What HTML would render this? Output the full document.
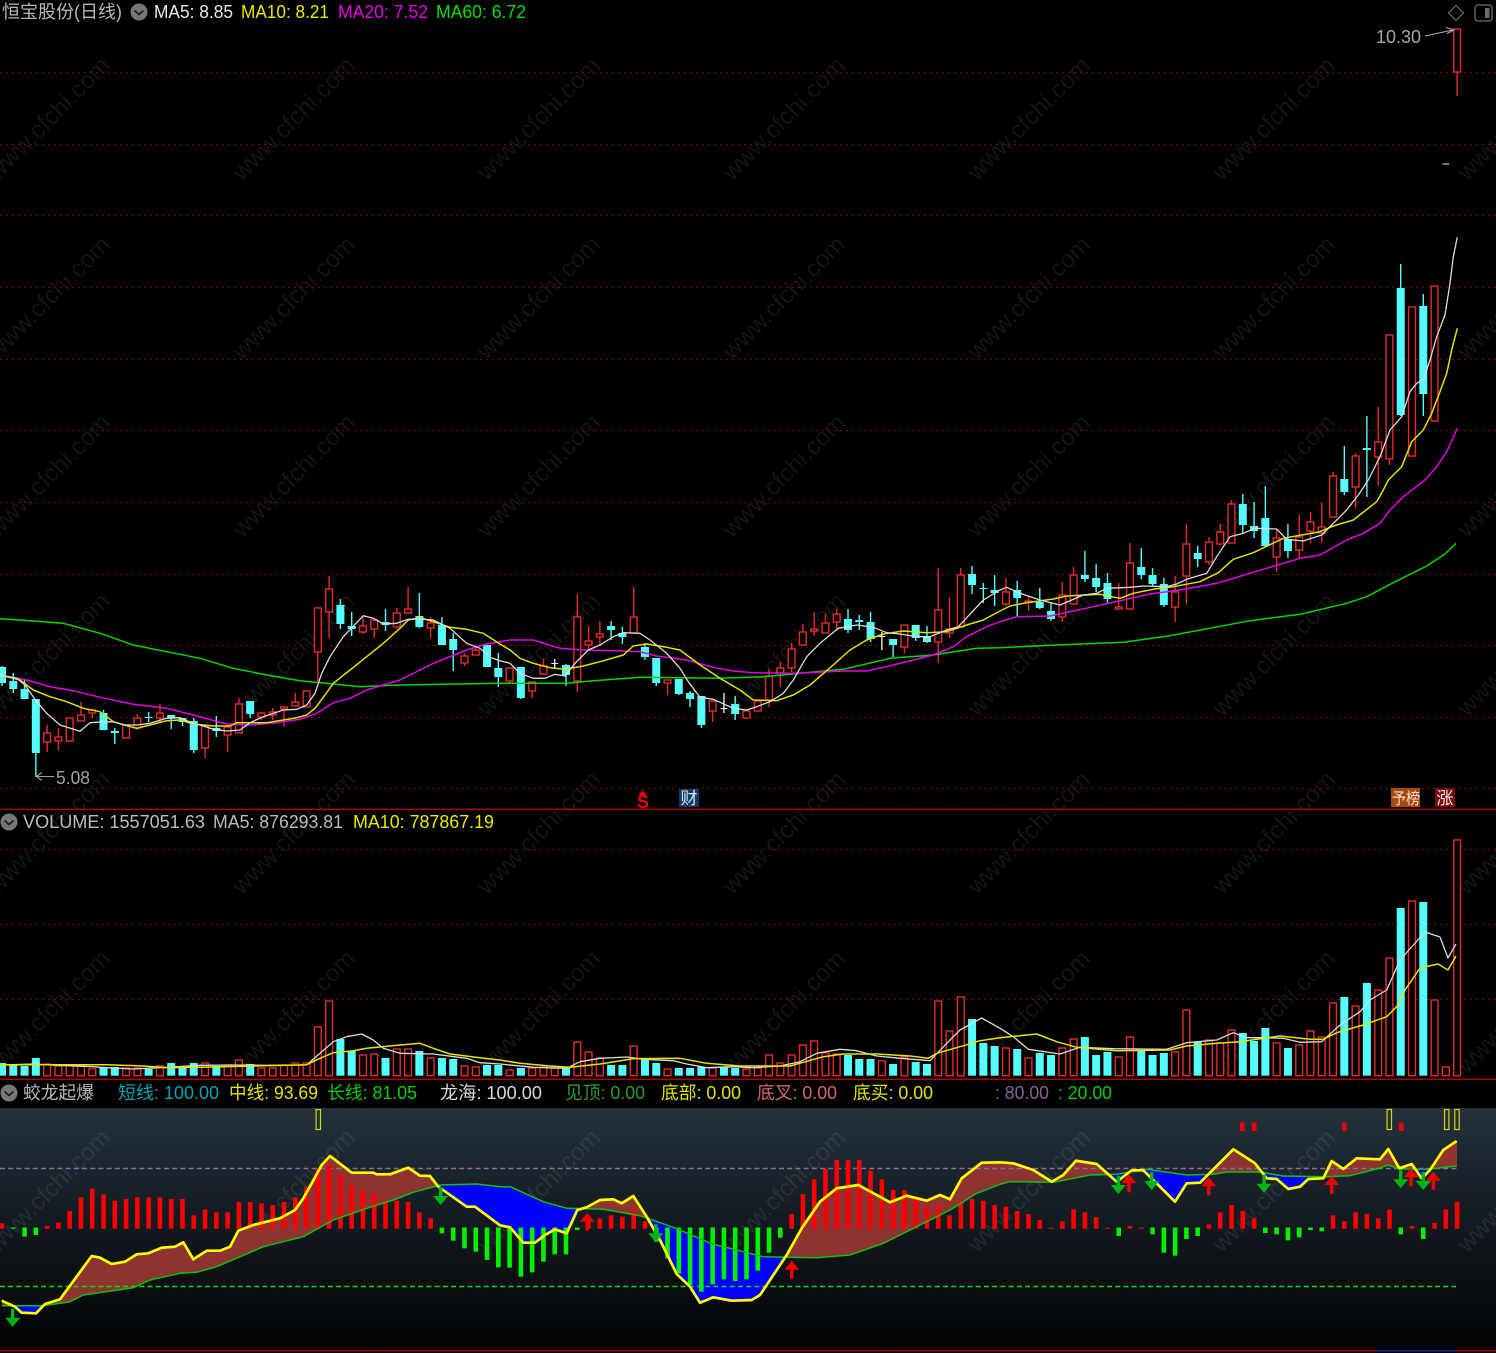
<!DOCTYPE html>
<html><head><meta charset="utf-8"><title>恒宝股份(日线)</title>
<style>
html,body{margin:0;padding:0;background:#000;width:1496px;height:1353px;overflow:hidden}
svg{display:block}
text{font-family:"Liberation Sans","WenQuanYi Zen Hei","Noto Sans CJK SC",sans-serif;font-size:18px}
.wm{font-size:24.500px;fill:#fff;fill-opacity:.08}
</style></head><body>
<svg id="s" xmlns="http://www.w3.org/2000/svg" width="1496" height="1353" viewBox="0 0 1496 1353">
<defs><linearGradient id="pg" x1="0" y1="0" x2="0" y2="1"><stop offset="0" stop-color="#24313d"/><stop offset=".45" stop-color="#141b22"/><stop offset="1" stop-color="#010203"/></linearGradient></defs>
<rect width="1496" height="1353" fill="#000"/>
<rect x="0" y="1108" width="1496" height="243" fill="url(#pg)"/>
<g id="wm"></g>
<g id="grid"></g>
<g id="vol"></g>
<g id="cand"></g>
<g id="ind"></g>

<rect x="0" y="808.6" width="1496" height="1.4" fill="#b00000"/>
<rect x="0" y="1078.6" width="1496" height="1.4" fill="#b00000"/>
<rect x="0" y="1350" width="1496" height="1.6" fill="#a00000"/>
<rect x="1376" y="1350" width="80" height="1.6" fill="#2020a0"/>

<!-- header 1 -->
<text x="2" y="18" textLength="120" lengthAdjust="spacingAndGlyphs" fill="#b8b8b8">恒宝股份(日线)</text>
<circle cx="139" cy="12" r="8.5" fill="#777"/><path d="M134.5 10.5l4.5 4 4.5-4" fill="none" stroke="#1a1a1a" stroke-width="1.6"/>
<text x="154" y="18" textLength="79" lengthAdjust="spacingAndGlyphs" fill="#e8e8e8">MA5: 8.85</text>
<text x="241" y="18" textLength="88" lengthAdjust="spacingAndGlyphs" fill="#e8e800">MA10: 8.21</text>
<text x="338" y="18" textLength="90" lengthAdjust="spacingAndGlyphs" fill="#e800e8">MA20: 7.52</text>
<text x="436" y="18" textLength="90" lengthAdjust="spacingAndGlyphs" fill="#00e000">MA60: 6.72</text>
<!-- top right icons -->
<path d="M1456 5.5l7.5 7.5-7.5 7.5-7.5-7.5z" fill="none" stroke="#606060" stroke-width="1.3"/>
<rect x="1475" y="5" width="17" height="16" rx="3" fill="none" stroke="#5c5c5c" stroke-width="1.6"/><rect x="1485" y="8" width="4.5" height="10" fill="#6a6a6a"/>
<!-- price markers -->
<text x="1376" y="43" textLength="45" lengthAdjust="spacingAndGlyphs" fill="#a8a8a8">10.30</text>
<path d="M1425 36L1453 30M1446 27.5L1454 30L1447 33.5" fill="none" stroke="#a8a8a8" stroke-width="1.1"/>
<text x="56" y="784" textLength="34" lengthAdjust="spacingAndGlyphs" fill="#a0a0a0">5.08</text>
<path d="M54 776.500H37M42 772.500L36.500 776.500L42 780.500" fill="none" stroke="#a0a0a0" stroke-width="1.1"/>
<!-- info flags -->
<path d="M642.500 790.500l4.500 4.500h-9z" fill="#f00000"/>
<text x="643" y="808" text-anchor="middle" fill="#f00000" style="font-size:18px;font-weight:700">S</text>
<rect x="679" y="789" width="20" height="18" fill="#0e3a6c"/>
<text x="689" y="804" text-anchor="middle" fill="#e4e4e4" style="font-size:17px">财</text>
<rect x="1391" y="788" width="29" height="19" fill="#a84a10"/>
<text x="1392" y="804" textLength="28" lengthAdjust="spacingAndGlyphs" fill="#f0e0d0" style="font-size:16px">予榜</text>
<rect x="1435" y="788" width="20" height="19" fill="#7a0a0a"/>
<text x="1445" y="804" text-anchor="middle" fill="#f4e8e8" style="font-size:17px">涨</text>

<!-- header 2 -->
<circle cx="9" cy="822" r="8.5" fill="#777"/><path d="M4.500 820.500l4.500 4 4.500-4" fill="none" stroke="#1a1a1a" stroke-width="1.6"/>
<text x="23" y="828" textLength="182" lengthAdjust="spacingAndGlyphs" fill="#bcbcbc">VOLUME: 1557051.63</text>
<text x="213" y="828" textLength="130" lengthAdjust="spacingAndGlyphs" fill="#bcbcbc">MA5: 876293.81</text>
<text x="353" y="828" textLength="141" lengthAdjust="spacingAndGlyphs" fill="#e8e800">MA10: 787867.19</text>

<!-- header 3 -->
<circle cx="9" cy="1093" r="8.5" fill="#777"/><path d="M4.500 1091.500l4.500 4 4.500-4" fill="none" stroke="#1a1a1a" stroke-width="1.6"/>
<text x="23" y="1099" textLength="71" lengthAdjust="spacingAndGlyphs" fill="#b8b8b8">蛟龙起爆</text>
<text x="118" y="1099" textLength="101" lengthAdjust="spacingAndGlyphs" fill="#00a4b4">短线: 100.00</text>
<text x="229" y="1099" textLength="89" lengthAdjust="spacingAndGlyphs" fill="#e4e400">中线: 93.69</text>
<text x="327" y="1099" textLength="90" lengthAdjust="spacingAndGlyphs" fill="#00d000">长线: 81.05</text>
<text x="440" y="1099" textLength="102" lengthAdjust="spacingAndGlyphs" fill="#d8d8d8">龙海: 100.00</text>
<text x="565" y="1099" textLength="80" lengthAdjust="spacingAndGlyphs" fill="#2c9c2c">见顶: 0.00</text>
<text x="661" y="1099" textLength="80" lengthAdjust="spacingAndGlyphs" fill="#e4e400">底部: 0.00</text>
<text x="757" y="1099" textLength="80" lengthAdjust="spacingAndGlyphs" fill="#d86868">底叉: 0.00</text>
<text x="853" y="1099" textLength="80" lengthAdjust="spacingAndGlyphs" fill="#e4e400">底买: 0.00</text>
<text x="995" y="1099" textLength="54" lengthAdjust="spacingAndGlyphs" fill="#8a6096">: 80.00</text>
<text x="1058" y="1099" textLength="54" lengthAdjust="spacingAndGlyphs" fill="#00d000">: 20.00</text>
</svg>
<script>
var $=function(i){return document.getElementById(i)};
var X=function(i){return 2+11.28*i};
var P=function(ox,oy,a){var r=[];for(var k=0;k<a.length;k+=2)r.push([ox+a[k]/3,oy+a[k+1]/3]);return r};
var S=function(p){return p.map(function(q){return q[0].toFixed(1)+','+q[1].toFixed(1)}).join(' ')};
var line=function(p,c,w){return '<polyline points="'+S(p)+'" fill="none" stroke="'+c+'" stroke-width="'+w+'" stroke-linejoin="round"/>'};
/* watermark */
var h='';[48,293,538,783,1028,1273,1518].forEach(function(x){[118,297,475,654,832,1011,1190].forEach(function(y){
h+='<text class="wm" text-anchor="middle" y="9" transform="translate('+x+','+y+') rotate(-45)">www.cfchi.com</text>'})});
$('wm').innerHTML=h;
/* grid */
h='';[72,144,215,287,359,430,502,574,645,717,788,849,924,999].forEach(function(y){
h+='<line x1="0" x2="1496" y1="'+y+'.5" y2="'+y+'.5" stroke="#8c0000" stroke-width="1" stroke-dasharray="2 4" shape-rendering="crispEdges"/>'});
$('grid').innerHTML=h;
/* candles: type top bot hi lo */
var C="c 667 683 666 686|c 681 689 673 693|c 689 699 680 699|c 699 753 699 777|r 733 742 725 752|r 737 741 728 750|r 718 741 718 742|r 715 721 702 721|r 710 713 709 718|c 713 730 710 730|c 731 733 728 744|r 725 738 725 738|r 718 728 714 730|c 717 718 712 722|r 713 718 704 722|c 715 718 715 729|c 718 722 718 726|c 721 750 718 753|r 726 748 726 758|c 728 731 716 737|r 727 735 725 752|r 704 733 698 733|c 701 714 701 718|r 713 717 712 720|r 712 715 708 720|r 707 709 707 727|r 702 706 693 706|r 691 707 691 707|r 608 652 608 682|r 589 612 576 638|c 605 624 599 629|c 626 629 612 636|r 626 632 616 634|r 620 629 620 638|c 622 625 609 631|r 613 627 608 629|r 609 613 587 613|c 616 627 593 628|r 623 628 617 638|c 625 645 617 645|c 639 650 633 671|r 656 663 653 666|r 650 655 645 655|c 645 667 645 667|c 668 677 653 687|r 668 681 668 683|c 667 698 667 699|r 682 691 682 698|r 666 674 659 675|w 663 664 659 669|c 665 675 664 686|r 617 681 594 692|r 641 645 626 650|r 634 637 621 645|c 626 630 621 640|c 633 637 627 644|r 617 633 587 634|c 647 657 643 660|c 658 683 658 686|r 680 683 680 695|c 679 694 679 695|c 693 699 691 707|c 696 725 696 728|r 701 711 701 722|w 708 709 693 713|c 704 714 696 720|r 711 718 711 718|r 701 711 701 711|r 676 700 669 707|r 668 673 662 687|r 649 668 643 672|r 632 645 624 645|r 629 631 612 636|r 623 633 614 633|r 614 622 609 629|c 619 630 609 633|c 620 622 615 630|c 622 639 612 642|w 636 637 632 650|c 639 645 639 657|r 625 647 625 653|c 625 638 625 641|c 637 642 626 643|r 610 642 568 663|r 629 633 597 638|r 575 627 568 627|c 574 585 566 594|c 588 589 583 603|c 590 593 575 606|r 592 604 578 606|c 590 598 581 617|r 601 602 597 611|c 602 608 588 609|c 611 619 603 621|r 595 617 582 622|r 575 604 567 605|c 575 579 551 582|c 578 587 564 592|c 583 599 573 603|r 607 609 583 609|r 563 609 543 609|c 567 575 548 579|c 575 584 568 586|c 584 605 578 607|r 592 607 576 622|r 544 576 524 604|c 553 559 546 567|r 542 562 537 565|r 532 544 524 545|r 504 543 500 543|c 504 525 494 533|c 526 531 502 538|c 518 546 486 547|r 538 557 530 572|c 539 551 524 558|r 537 550 515 558|r 522 531 512 543|r 527 533 503 543|r 476 517 472 517|c 479 492 446 495|r 456 487 453 508|c 448 450 416 497|r 442 457 407 486|r 335 459 335 465|c 288 415 264 416|r 307 456 307 457|c 306 394 294 416|r 286 421 286 421|w 163.5 164.5 163.5 164.5|r 29 72 29 96".split('|');
var red='#e62a2a',cy='#54fcfc';
h='';C.forEach(function(s,i){var a=s.split(' '),t=a[0],b=+a[1],e=+a[2],u=+a[3],l=+a[4],x=X(i);
var col=t=='r'?red:t=='c'?cy:'#e8e8e8';
if(u<b)h+='<line x1="'+x+'" x2="'+x+'" y1="'+u+'" y2="'+b+'" stroke="'+col+'" stroke-width="1.4"/>';
if(l>e)h+='<line x1="'+x+'" x2="'+x+'" y1="'+e+'" y2="'+l+'" stroke="'+col+'" stroke-width="1.4"/>';
if(t=='r')h+='<rect x="'+(x-3.4)+'" y="'+b+'" width="6.8" height="'+(e-b)+'" fill="#000" stroke="'+col+'" stroke-width="1.4"/>';
else if(t=='c')h+='<rect x="'+(x-4)+'" y="'+b+'" width="8" height="'+(e-b)+'" fill="'+col+'"/>';
else h+='<rect x="'+(x-3.5)+'" y="'+b+'" width="7" height="'+(e-b)+'" fill="'+col+'"/>';
});
var m5=P(0,570,[0,315,50,325,75,345,110,395,140,430,180,465,240,484,270,458,300,456,340,455,375,465,410,465,450,460,500,445,540,443,575,458,610,468,640,478,680,483,720,480,750,458,790,440,850,420,890,418,920,405,945,370,965,310,990,260,1030,200,1090,137,1120,145,1150,162,1190,160,1225,148,1260,147,1300,150,1350,175,1400,220,1440,235,1470,262])
.concat(P(500,570,[0,272,30,280,60,310,100,325,135,325,165,313,195,318,225,280,265,240,300,225,340,200,370,188,420,190,450,210,500,250,540,295,565,335,600,382,640,388,700,415,740,420,770,410,810,395,850,370,880,330,920,260,960,220,1015,175,1070,165,1120,172,1160,188,1200,192,1250,200,1290,200,1340,180,1375,170,1450,90]))
.concat(P(1000,480,[0,330,20,322,60,340,120,360,180,375,250,345,290,340,320,325,390,322,430,318,500,320,530,312,560,298,620,280,650,230,690,170,730,160,765,145,830,147,860,178,910,183,965,165,1000,130,1040,90,1075,45,1105,0]))
.concat(P(1240,220,[420,710,450,630,485,590,510,515,530,490,550,480,570,420,590,350,615,285,630,190,640,110,652,52]));
var m10=P(0,570,[0,315,60,330,100,360,150,380,200,395,250,415,300,425,340,455,380,467,410,475,450,465,500,452,540,450,580,462,640,468,690,468,710,458,800,458,890,443,920,435,945,415,975,375,1000,340,1050,300,1100,260,1150,220,1200,175,1225,150,1260,143,1300,155,1350,172,1400,178,1450,190])
.concat(P(500,570,[0,222,30,240,60,265,100,280,150,293,195,298,250,288,300,275,370,255,400,228,440,222,500,232,540,240,600,285,660,325,720,360,760,390,830,392,880,375,930,345,985,298,1050,240,1100,210,1150,192,1210,183,1280,188,1340,185,1400,165,1450,150]))
.concat(P(1000,480,[0,393,30,378,80,368,160,357,200,348,300,343,360,355,400,340,460,328,520,320,600,305,655,278,700,238,760,218,850,175,960,155,1000,138,1060,120,1130,65,1150,30,1165,0]))
.concat(P(1240,220,[485,740,515,665,550,630,575,580,600,515,620,460,635,390,652,325]));
var m20=P(0,570,[0,315,80,330,150,350,220,362,300,382,400,403,500,415,580,435,680,462,750,465,830,458,900,448,950,430,1000,398,1050,385,1100,360,1200,330,1300,280,1400,240,1460,222])
.concat(P(500,570,[0,215,30,210,100,210,180,235,250,240,350,242,420,245,470,258,560,270,640,292,700,303,760,308,890,310,1030,303,1100,303,1180,285,1300,255,1360,230,1400,200,1460,170]))
.concat(P(1000,480,[0,425,50,410,150,408,280,380,450,342,540,330,650,310,800,265,900,235,960,225,1040,180,1090,160,1140,130,1170,90,1210,50,1275,0]))
.concat(P(1240,220,[590,740,620,695,652,625]));
var m60=P(0,570,[0,146,90,152,190,160,300,190,400,225,500,245,600,265,700,295,800,315,900,332,1000,342,1080,350,1200,345,1500,340])
.concat(P(500,570,[200,340,280,332,420,322,660,325,790,320,900,310,1030,298,1170,265,1300,255,1430,235]))
.concat(P(1000,480,[0,503,170,495,370,487,510,467,750,422,900,403,1040,370,1100,350,1180,308,1280,258,1335,222,1368,190]));
h+=line(m60,'#00d800',1.5)+line(m20,'#e400e4',1.5)+line(m10,'#e2e200',1.5)+line(m5,'#dcdcdc',1.3);
$('cand').innerHTML=h;
/* volume */
var V=[-1063,-1064,-1066,-1058,1064,1066,1065,1066,1069,-1067,-1067,1068,1068,-1069,1066,-1063,-1068,-1063,1063,-1066,1065,1060,-1064,1068,1068,1065,1063,1063,1027,1001,-1039,-1051,1055,1054,-1058,1049,1049,-1051,1058,-1058,-1059,1066,1067,-1065,-1065,1070,-1068,1068,1067,1068,-1067,1042,1052,1058,-1065,-1065,1046,-1058,-1063,1069,-1068,-1068,-1067,1068,-1067,-1068,1069,1068,1055,1063,1055,1045,1041,1053,1054,-1055,-1059,-1059,1061,-1064,1057,-1062,-1064,1001,1031,997,-1019,-1043,-1046,1048,-1049,1058,-1053,-1055,1048,1039,-1037,-1055,-1052,1057,1037,-1050,-1055,-1053,1052,1010,-1042,1040,1043,1030,-1033,-1041,-1028,1043,-1048,1045,1031,1037,1003,-997,1006,-983,990,958,-908,901,-902,1000,1067,840];
h='';var vb=1075.7;V.forEach(function(t,i){var x=X(i);
if(t>0)h+='<rect x="'+(x-3.4)+'" y="'+t+'" width="6.8" height="'+(vb-t)+'" fill="#000" stroke="'+red+'" stroke-width="1.4"/>';
else h+='<rect x="'+(x-4)+'" y="'+(-t)+'" width="8" height="'+(vb+t)+'" fill="'+cy+'"/>';});
var vw=P(0,990,[0,225,100,222,170,226,280,230,300,232,400,237,500,232,600,226,700,225,800,226,920,225,960,190,1000,155,1040,140,1085,132,1120,150,1150,175,1200,190,1300,192,1400,205,1440,218])
.concat(P(500,990,[0,222,100,232,200,235,240,215,300,205,380,201,430,208,520,212,560,222,620,233,700,230,760,233,840,228,900,215,950,190,1020,178,1070,182,1130,198,1200,205,1290,212,1340,160,1380,120,1445,84]))
.concat(P(1000,990,[0,115,40,140,85,178,180,192,240,172,340,176,500,178,560,158,650,150,700,128,740,143,790,143,850,145,900,157,965,155,1020,105,1080,65,1110,30,1160,0]))
.concat([[1400,960],[1425,932],[1440,937],[1448,958],[1456,944]]);
var vy=P(0,990,[0,225,100,224,320,224,430,228,500,233,600,232,920,224,960,205,1000,188,1060,182,1100,175,1200,165,1260,160,1300,175,1350,192,1440,203])
.concat(P(500,990,[0,210,60,220,150,228,210,232,300,222,400,206,540,205,620,220,720,228,870,228,970,200,1030,192,1130,192,1230,198,1285,205,1310,190,1380,170,1440,152]))
.concat(P(1000,990,[0,143,110,132,170,155,230,172,350,182,510,180,560,168,650,160,720,155,840,138,930,148,970,148,1010,128,1090,105,1160,80,1190,50,1215,0]))
.concat([[1420,968],[1438,964],[1448,970],[1456,956]]);
h+=line(vw,'#dcdcdc',1.3)+line(vy,'#e6e600',1.5);
$('vol').innerHTML=h;
/* indicator */
var Y=P(0,990,[5,932,45,950,65,968,108,970,135,942,180,928,275,798,300,803,335,822,375,815,410,793,445,790,485,773,525,770,550,757,580,808,620,782,660,782,690,770,715,722,760,705,840,685,885,660,910,625,935,580,965,525,990,498,1055,548,1120,548,1130,553,1170,553,1225,533,1260,557,1290,558,1315,590,1400,650,1425,650])
.concat(P(500,990,[0,706,30,712,70,758,105,758,135,735,165,718,200,730,232,660,260,652,300,630,340,628,365,640,400,618,440,680,480,750,530,852,570,890,600,938,640,922,695,932,755,930,780,915,860,795,905,715,960,635,1010,595,1075,585,1130,615,1170,637,1220,617,1280,632,1320,615,1350,628,1385,565,1445,518]))
.concat(P(1000,990,[0,517,40,520,100,540,155,575,190,555,228,512,290,522,350,575,395,541,430,541,490,600,525,635,560,580,600,578,700,478,765,520,800,565,830,567,865,597,900,590,925,567,970,565,995,513,1030,537,1070,505,1140,508,1165,477,1198,535,1235,522,1265,565,1290,540,1330,480,1370,453]));
var G=P(0,990,[5,947,130,947,210,935,250,915,400,893,450,870,540,850,590,847,650,830,790,770,910,740,1000,690,1100,655,1180,630,1240,607,1320,585,1430,582])
.concat(P(500,990,[0,590,30,590,130,635,200,655,310,658,420,677,520,712,640,763,790,800,950,803,1050,795,1150,760,1270,700,1350,660,1430,610]))
.concat(P(1000,990,[0,583,30,575,160,577,270,555,350,553,440,538,560,555,640,553,680,546,780,546,850,558,975,560,1050,557,1130,537,1165,525,1200,537,1280,538,1370,528]));
function I(p,x){if(x<=p[0][0])return p[0][1];for(var k=1;k<p.length;k++)if(x<=p[k][0]){var a=p[k-1],b=p[k];return a[1]+(b[1]-a[1])*(x-a[0])/((b[0]-a[0])||1)}return p[p.length-1][1]}
var br='',bl='';for(var x=2;x<1457;x++){var a=I(Y,x+.5),b=I(G,x+.5);var s='M'+x+' '+a.toFixed(1)+'h1V'+b.toFixed(1)+'h-1z';if(a<b)br+=s;else bl+=s}
h='<path d="'+br+'" fill="#8f3232" shape-rendering="crispEdges"/><path d="'+bl+'" fill="#0000ff" shape-rendering="crispEdges"/>';
h+='<line x1="0" x2="1457" y1="1168.5" y2="1168.5" stroke="#8a6a96" stroke-width="1.4" stroke-dasharray="5 3.2"/>';
h+='<line x1="0" x2="1456" y1="1286.5" y2="1286.5" stroke="#00e000" stroke-width="1.4" stroke-dasharray="5 3.2"/>';
var H=[700,-716,-740,-735,708,698,663,622,596,613,632,627,622,622,622,627,627,676,658,667,667,636,636,640,645,636,622,590,535,523,555,586,604,613,632,632,636,667,685,-730,-752,-775,-785,-810,-832,-833,-860,-847,-815,-793,-793,-720,680,685,676,680,658,694,-755,-805,-850,-885,-905,-883,-868,-873,-868,-842,-788,-743,672,613,568,537,510,510,510,542,568,600,600,622,650,645,676,632,627,632,645,650,663,672,690,713,694,658,667,681,713,-738,708,713,-733,-788,-797,-747,-738,703,667,645,663,685,-729,-733,-751,-742,-720,-724,676,694,667,672,685,658,-733,708,-747,699,658,636];
H.forEach(function(v,i){var x=X(i)-2.3;
if(v>0){var t=990+v/3;h+='<rect x="'+x+'" y="'+t+'" width="4.6" height="'+(1228.7-t)+'" fill="#ff0000"/>'}
else{var e=990-v/3;h+='<rect x="'+x+'" y="1227.5" width="4.6" height="'+(e-1227.5)+'" fill="#00f000"/>'}});
h+=line(G,'#10c010',1.5)+line(Y,'#ffff00',2.7);
[318.3,1389.3,1446.7,1457].forEach(function(x){h+='<rect x="'+(x-2.2)+'" y="1109.500" width="4.4" height="20" fill="none" stroke="#d8d800" stroke-width="1.2"/>'});
[1242.3,1254.3,1344.3,1401.3].forEach(function(x){h+='<rect x="'+(x-2.3)+'" y="1122.300" width="4.6" height="8.7" fill="#f00000"/>'});
[[12.7,1326.7],[440.7,1205],[655.7,1242.3],[1118.3,1194],[1151.7,1190],[1264,1192.7],[1400.7,1188.3],[1423.3,1190]].forEach(function(a){var x=a[0],y=a[1];
h+='<path d="M'+x+' '+y+'l-7.500 -9h5.800v-9h3.400v9h5.800z" fill="#00b414"/>'});
[[587.3,1212.7],[791.7,1260.7],[1129,1174.3],[1208.7,1177.3],[1331.7,1176],[1411,1168.3],[1433.3,1171.7]].forEach(function(a){var x=a[0],y=a[1];
h+='<path d="M'+x+' '+y+'l-7.500 9h5.800v9h3.400v-9h5.800z" fill="#f00000"/>'});
$('ind').innerHTML=h;
</script>
</body></html>
